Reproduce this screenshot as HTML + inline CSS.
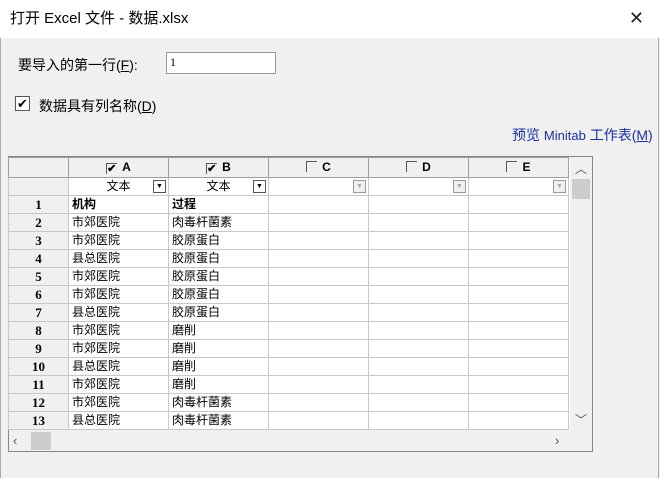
<!DOCTYPE html><html><head><meta charset="utf-8"><style>
*{margin:0;padding:0;box-sizing:border-box}
body{width:660px;height:478px;background:#f0f0f0;font-family:"Liberation Sans","Noto Sans CJK SC",sans-serif;font-size:13px;color:#000;position:relative;overflow:hidden}
.a{position:absolute}
.title{left:0;top:0;width:660px;height:38px;background:#fff;font-size:15px;line-height:38px;padding-left:10px}
.grid{left:8px;top:156px;width:585px;height:296px;border:1px solid #828790;background:#fff}
table{border-collapse:collapse;position:absolute;left:-1px;top:0;table-layout:fixed}
td{border:1px solid #c8c8c8;height:18px;padding:0 3px;font-size:12px;line-height:17px;white-space:nowrap;overflow:hidden}
td.h{background:#f0f0f0;text-align:center;font-weight:bold;font-family:"Liberation Serif","Noto Serif CJK SC",serif;font-size:13px}
tr.hd td{height:20px;background:#f0f0f0;text-align:center;font-weight:bold;border-color:#a0a0a0}
.cb{display:inline-block;width:11px;height:11px;border-left:1px solid #555;border-top:1px solid #555;vertical-align:-1px;margin-right:5px;font-size:11px;line-height:10px;font-weight:bold;text-align:left}
.dd{position:relative}
.arr{position:absolute;right:2px;top:2px;width:13px;height:13px;background:#f0f0f0;border:1px solid #999;font-size:7px;line-height:12px;text-align:center}
</style></head><body>
<div class="a" style="left:0;top:0;width:1px;height:478px;background:#aaa"></div>
<div class="a" style="right:1px;top:0;width:1px;height:478px;background:#aaa"></div>
<div class="a title">打开 Excel 文件 - 数据.xlsx</div>
<div class="a" style="right:16px;top:8px;font-size:18px;color:#222">✕</div>
<div class="a" style="left:18px;top:55px;font-size:14px">要导入的第一行(<u>F</u>):</div>
<div class="a" style="left:166px;top:52px;width:110px;height:22px;background:#fff;border:1px solid #999;font-size:12px;padding:2px 3px;font-family:'Liberation Serif',serif">1</div>
<div class="a" style="left:15px;top:96px;width:15px;height:15px;background:#fff;border:1px solid #555;font-size:13px;line-height:13px;text-align:center">✔</div>
<div class="a" style="left:39px;top:96px;font-size:14px">数据具有列名称(<u>D</u>)</div>
<div class="a" style="left:512px;top:125px;font-size:14px;color:#1a2fa0">预览 <span style="font-size:13px">Minitab</span> 工作表(<u>M</u>)</div>
<div class="a grid">
<table>
<colgroup><col style="width:60px"><col style="width:100px"><col style="width:100px"><col style="width:100px"><col style="width:100px"><col style="width:100px"></colgroup>
<tr class="hd"><td></td><td><span class="cb">✔</span>A</td><td><span class="cb">✔</span>B</td><td><span class="cb"></span>C</td><td><span class="cb"></span>D</td><td><span class="cb"></span>E</td></tr>
<tr><td class="h"></td><td class="dd" style="text-align:center">文本<span class="arr" style="background:#fff;border-color:#555">▼</span></td><td class="dd" style="text-align:center">文本<span class="arr" style="background:#fff;border-color:#555">▼</span></td><td class="dd"><span class="arr" style="color:#aaa">▼</span></td><td class="dd"><span class="arr" style="color:#aaa">▼</span></td><td class="dd"><span class="arr" style="color:#aaa">▼</span></td></tr>
<tr><td class="h">1</td><td><b>机构</b></td><td><b>过程</b></td><td></td><td></td><td></td></tr>
<tr><td class="h">2</td><td>市郊医院</td><td>肉毒杆菌素</td><td></td><td></td><td></td></tr>
<tr><td class="h">3</td><td>市郊医院</td><td>胶原蛋白</td><td></td><td></td><td></td></tr>
<tr><td class="h">4</td><td>县总医院</td><td>胶原蛋白</td><td></td><td></td><td></td></tr>
<tr><td class="h">5</td><td>市郊医院</td><td>胶原蛋白</td><td></td><td></td><td></td></tr>
<tr><td class="h">6</td><td>市郊医院</td><td>胶原蛋白</td><td></td><td></td><td></td></tr>
<tr><td class="h">7</td><td>县总医院</td><td>胶原蛋白</td><td></td><td></td><td></td></tr>
<tr><td class="h">8</td><td>市郊医院</td><td>磨削</td><td></td><td></td><td></td></tr>
<tr><td class="h">9</td><td>市郊医院</td><td>磨削</td><td></td><td></td><td></td></tr>
<tr><td class="h">10</td><td>县总医院</td><td>磨削</td><td></td><td></td><td></td></tr>
<tr><td class="h">11</td><td>市郊医院</td><td>磨削</td><td></td><td></td><td></td></tr>
<tr><td class="h">12</td><td>市郊医院</td><td>肉毒杆菌素</td><td></td><td></td><td></td></tr>
<tr><td class="h">13</td><td>县总医院</td><td>肉毒杆菌素</td><td></td><td></td><td></td></tr>
</table>
<div class="a" style="left:561px;top:0;width:22px;height:273px;background:#f0f0f0"></div>
<div class="a" style="left:566px;top:3px;font-size:12px;color:#555">︿</div>
<div class="a" style="left:563px;top:22px;width:18px;height:20px;background:#cdcdcd"></div>
<div class="a" style="left:566px;top:254px;font-size:12px;color:#555">﹀</div>
<div class="a" style="left:0;top:273px;width:583px;height:21px;background:#f0f0f0"></div>
<div class="a" style="left:4px;top:276px;font-size:13px;color:#555">‹</div>
<div class="a" style="left:22px;top:275px;width:20px;height:18px;background:#cdcdcd"></div>
<div class="a" style="left:546px;top:276px;font-size:13px;color:#555">›</div>
</div>
</body></html>
